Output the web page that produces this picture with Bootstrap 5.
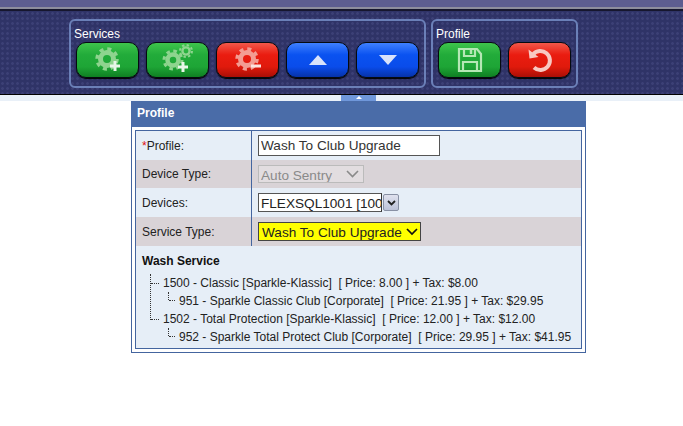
<!DOCTYPE html>
<html lang="en">
<head>
  <meta charset="UTF-8">
  <meta name="viewport" content="width=device-width, initial-scale=1.0">
  <title>Profile</title>
  <link href="https://cdn.jsdelivr.net/npm/bootstrap@5.3.0/dist/css/bootstrap.min.css" rel="stylesheet">
  <script src="https://cdn.jsdelivr.net/npm/bootstrap@5.3.0/dist/js/bootstrap.bundle.min.js"></script>
  <style>
    body { background: #fff; font-family: "Liberation Sans", Arial, sans-serif; font-size: 12px; color: #1a1a1a; overflow: hidden; }
    .top-strip { height: 7px; background: #5d5d90; border-bottom: 2px solid #8d8d9d; box-sizing: content-box; }
    .tool-bar { height: 86px; padding: 8px 0 0 69px; gap: 5px; border-top: 2px solid #16162e; border-bottom: 1px solid #000;
      background-color: #2f3367; background-image: radial-gradient(circle, #3c4076 1.3px, transparent 1.5px); background-size: 5px 5px; }
    .tool-group { height: 69px; border: 2px solid #6b80b8; border-radius: 6px; padding: 6px 5px 0 3px; color: #fff; }
    .tool-group h6 { font-size: 12px; font-weight: 400; line-height: 14px; margin: 0 0 1px 0; }
    .tool-btn { width: 63px; height: 36px; padding: 0; border: 1px solid #050a10; border-radius: 10px; box-shadow: 0 1px 1px #000; }
    .tool-btn svg { display: block; }
    .tool-green { background: linear-gradient(#3ec44c, #22ab3a 35%, #1ea536 70%, #0f7f22); }
    .tool-red { background: linear-gradient(#f2584a, #ea1c10 35%, #e01a0c 70%, #a90e06); }
    .tool-blue { background: linear-gradient(#3f80ff, #0a52f0 35%, #0a4cea 70%, #0632a8); }
    .tool-row { gap: 7px; padding-left: 2px; }
    .under-strip { height: 6px; background: #e9f0f8; position: relative; }
    .collapse-tab { position: absolute; left: 341px; top: 0; width: 35px; height: 6px; background: #6f97da; }
    .collapse-tab::after { content: ""; position: absolute; left: 15px; top: 1px; border: 3px solid transparent; border-top: 0; border-bottom: 3px solid #fff; }
    .profile-panel { width: 455px; margin-left: 131px; border: 1px solid #44659f; border-top: 0; padding-bottom: 3px; background: #fff; }
    .panel-head { height: 26px; background: #4a6ca8; color: #fff; font-weight: 700; line-height: 25px; padding-left: 6px; margin: 0 -1px 3px -1px; }
    .panel-box { margin: 0 3px 0 3px; border: 1px solid #44659f; background: #e6eef7; }
    .field-row { height: 29px; }
    .field-row.shade { background: #d9d3d7; }
    .field-row.short-row { height: 28px; }
    .field-label { width: 116px; padding-left: 6px; border-right: 1px solid #44659f; color: #222; }
    .field-label i { color: #d11; font-style: normal; }
    .field-value { padding-left: 6px; }
    .plain-input { width: 182px; height: 21px; border: 1px solid #555; background: #fff; font-size: 13.6px; padding: 0 2px; color: #333; border-radius: 0; }
    .plain-select { font-size: 13.6px; height: 19px; padding: 0 0 0 2px; border-radius: 0; appearance: none; }
    .auto-select { width: 106px; height: 18px; border: 1px solid #bbb; background: #e2dde0; color: #8a8a8a; }
    .device-select { width: 124px; border: 1px solid #555; border-right: 1px solid #333; background: #fff; color: #222; }
    .yellow-select { width: 163px; border: 1px solid #444; background: #ffff00; color: #222; padding-left: 3px; }
    .sel-wrap { position: relative; }
    .sel-wrap svg { position: absolute; pointer-events: none; }
    .arrow-box { width: 16px; height: 17px; margin-left: 1px; background: linear-gradient(#dfe1ee, #bcc2d8); border: 1px solid #8890a4; border-radius: 2px; }
    .tree-title { font-weight: 700; color: #111; line-height: 14px; padding: 8px 0 0 6px; }
    .tree-list { list-style: none; margin: 0; padding: 6px 0 2px 27px; position: relative; }
    .tree-list li { height: 18px; line-height: 18px; white-space: nowrap; position: relative; color: #222; }
    .tree-list li.lvl2 { padding-left: 16px; }
    .tree-list::before { content: ""; position: absolute; left: 14px; top: 6px; height: 46px; border-left: 1px dotted #333; }
    .tree-list li::before { content: ""; position: absolute; left: -12px; top: 9px; width: 8px; border-top: 1px dotted #333; }
    .tree-list li.lvl2::before { left: 6px; top: 8px; width: 6px; }
    .tree-list li.lvl2::after { content: ""; position: absolute; left: 5px; top: 0; height: 8px; border-left: 1px dotted #333; }
  </style>
</head>
<body>
  <div class="top-strip"></div>
  <div class="tool-bar d-flex">
    <div class="tool-group">
      <h6>Services</h6>
      <div class="tool-row d-flex">
        <button class="btn tool-btn tool-green d-flex align-items-center justify-content-center" type="button" aria-label="Add">
          <svg width="30" height="28" viewBox="0 0 30 28">
            <circle cx="14" cy="13" r="6.5" fill="none" stroke="#8ed48e" stroke-width="5"/>
            <circle cx="14" cy="13" r="10" fill="none" stroke="#8ed48e" stroke-width="3.5" stroke-dasharray="4 3.85"/>
            <path d="M22 15v10M17 20h10" stroke="#e8f6e8" stroke-width="3"/>
          </svg>
        </button>
        <button class="btn tool-btn tool-green d-flex align-items-center justify-content-center" type="button" aria-label="Add multiple">
          <svg width="32" height="32" viewBox="0 0 32 32">
            <circle cx="24" cy="7" r="3.6" fill="none" stroke="#8ed48e" stroke-width="2.4"/>
            <circle cx="24" cy="7" r="6" fill="none" stroke="#8ed48e" stroke-width="2" stroke-dasharray="2.4 2.3"/>
            <circle cx="11" cy="16" r="5.5" fill="none" stroke="#8ed48e" stroke-width="4.5"/>
            <circle cx="11" cy="16" r="9" fill="none" stroke="#8ed48e" stroke-width="3" stroke-dasharray="3.6 3.47"/>
            <path d="M21 18v10M16 23h10" stroke="#e8f6e8" stroke-width="3"/>
          </svg>
        </button>
        <button class="btn tool-btn tool-red d-flex align-items-center justify-content-center" type="button" aria-label="Remove">
          <svg width="30" height="28" viewBox="0 0 30 28">
            <circle cx="14" cy="13" r="6.5" fill="none" stroke="#f39c92" stroke-width="5"/>
            <circle cx="14" cy="13" r="10" fill="none" stroke="#f39c92" stroke-width="3.5" stroke-dasharray="4 3.85"/>
            <path d="M18 20h10" stroke="#fbe4e0" stroke-width="3"/>
          </svg>
        </button>
        <button class="btn tool-btn tool-blue d-flex align-items-center justify-content-center" type="button" aria-label="Up">
          <svg width="18" height="10" viewBox="0 0 18 10"><path d="M9 0l9 10H0z" fill="#d8e2fb"/></svg>
        </button>
        <button class="btn tool-btn tool-blue d-flex align-items-center justify-content-center" type="button" aria-label="Down">
          <svg width="18" height="10" viewBox="0 0 18 10"><path d="M0 0h18L9 10z" fill="#d8e2fb"/></svg>
        </button>
      </div>
    </div>
    <div class="tool-group">
      <h6>Profile</h6>
      <div class="tool-row d-flex">
        <button class="btn tool-btn tool-green d-flex align-items-center justify-content-center" type="button" aria-label="Save">
          <svg width="26" height="26" viewBox="0 0 26 26" fill="none" stroke="#b5e8b5" stroke-width="2.2">
            <path d="M2 2h18l4 5v17H2z"/><path d="M7 2v7h11V2"/><path d="M14 3v4" stroke-width="2.5"/><path d="M6 24v-9h14v9"/>
          </svg>
        </button>
        <button class="btn tool-btn tool-red d-flex align-items-center justify-content-center" type="button" aria-label="Reset">
          <svg width="26" height="26" viewBox="0 0 26 26" fill="none" stroke="#f8c8c2" stroke-width="4">
            <path d="M6 7.5a9.5 9.5 0 1 1 1 13"/><path d="M1.5 2.5l1 9 9-1.5z" fill="#f8c8c2" stroke="none"/>
          </svg>
        </button>
      </div>
    </div>
  </div>
  <div class="under-strip"><div class="collapse-tab"></div></div>
  <div class="profile-panel">
    <div class="panel-head">Profile</div>
    <div class="panel-box">
      <div class="field-row d-flex">
        <div class="field-label d-flex align-items-center"><span><i>*</i>Profile:</span></div>
        <div class="field-value d-flex align-items-center"><input class="plain-input" type="text" value="Wash To Club Upgrade"></div>
      </div>
      <div class="field-row short-row shade d-flex">
        <div class="field-label d-flex align-items-center">Device Type:</div>
        <div class="field-value d-flex align-items-center">
          <div class="sel-wrap">
            <select class="plain-select auto-select d-block" disabled><option>Auto Sentry</option></select>
            <svg style="left:88px;top:5px" width="13" height="8" viewBox="0 0 13 8" fill="none" stroke="#8a8a8a" stroke-width="1.6"><path d="M1 1l5.5 5.5L12 1"/></svg>
          </div>
        </div>
      </div>
      <div class="field-row d-flex">
        <div class="field-label d-flex align-items-center">Devices:</div>
        <div class="field-value d-flex align-items-center">
          <select class="plain-select device-select"><option>FLEXSQL1001 [1001]</option></select>
          <div class="arrow-box d-flex align-items-center justify-content-center">
            <svg width="9" height="6" viewBox="0 0 9 6" fill="none" stroke="#222" stroke-width="1.8"><path d="M1 1l3.5 3.5L8 1"/></svg>
          </div>
        </div>
      </div>
      <div class="field-row shade d-flex">
        <div class="field-label d-flex align-items-center">Service Type:</div>
        <div class="field-value d-flex align-items-center">
          <div class="sel-wrap">
            <select class="plain-select yellow-select d-block"><option>Wash To Club Upgrade</option></select>
            <svg style="left:148px;top:6px" width="12" height="8" viewBox="0 0 12 8" fill="none" stroke="#111" stroke-width="1.7"><path d="M1 1l5 5 5-5"/></svg>
          </div>
        </div>
      </div>
      <div class="tree-title">Wash Service</div>
      <ul class="tree-list">
        <li>1500 - Classic [Sparkle-Klassic]&nbsp; [ Price: 8.00 ] + Tax: $8.00</li>
        <li class="lvl2">951 - Sparkle Classic Club [Corporate]&nbsp; [ Price: 21.95 ] + Tax: $29.95</li>
        <li>1502 - Total Protection [Sparkle-Klassic]&nbsp; [ Price: 12.00 ] + Tax: $12.00</li>
        <li class="lvl2">952 - Sparkle Total Protect Club [Corporate]&nbsp; [ Price: 29.95 ] + Tax: $41.95</li>
      </ul>
    </div>
  </div>
</body>
</html>
